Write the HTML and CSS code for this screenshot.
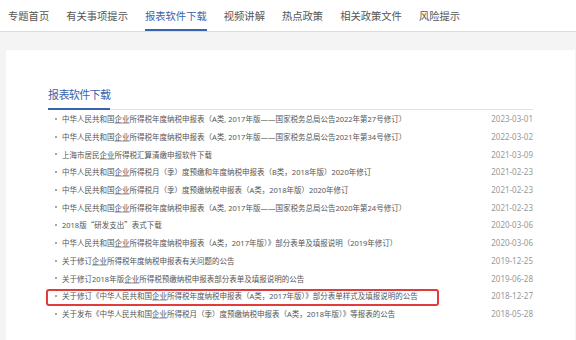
FILE: index.html
```html
<!DOCTYPE html>
<html>
<head>
    <title>报表软件下载</title>
    <link rel="stylesheet" href="styles.css">
</head>
<body>
    <div class="nav">
        <a class="tab">专题首页</a>
        <a class="tab">有关事项提示</a>
        <a class="tab active">报表软件下载</a>
        <a class="tab">视频讲解</a>
        <a class="tab">热点政策</a>
        <a class="tab">相关政策文件</a>
        <a class="tab">风险提示</a>
    </div>

    <div class="card">
        <div class="heading">
            <h2>报表软件下载</h2>
        </div>
        <ul class="list">
            <li><span class="title">中华人民共和国<u>企业</u>所得税年度纳税申报表（A类, 2017年版——国家税务总局公告2022年第27号修订）</span><span class="date">2023-03-01</span></li>
            <li><span class="title">中华人民共和国<u>企业</u>所得税年度纳税申报表（A类, 2017年版——国家税务总局公告2021年第34号修订）</span><span class="date">2022-03-02</span></li>
            <li><span class="title">上海市居民<u>企业</u>所得税汇算清缴申报软件下载</span><span class="date">2021-03-09</span></li>
            <li><span class="title">中华人民共和国<u>企业</u>所得税月（季）度预缴和年度纳税申报表（B类，2018年版）2020年修订</span><span class="date">2021-02-23</span></li>
            <li><span class="title">中华人民共和国<u>企业</u>所得税月（季）度预缴纳税申报表（A类，2018年版）2020年修订</span><span class="date">2021-02-23</span></li>
            <li><span class="title">中华人民共和国<u>企业</u>所得税年度纳税申报表（A类, 2017年版——国家税务总局公告2020年第24号修订）</span><span class="date">2021-02-23</span></li>
            <li><span class="title">2018版<span class="cjk">“研发支出”</span>表式下载</span><span class="date">2020-03-06</span></li>
            <li><span class="title">中华人民共和国<u>企业</u>所得税年度纳税申报表（A类，2017年版）》部分表单及填报说明（2019年修订）</span><span class="date">2020-03-06</span></li>
            <li><span class="title">关于修订<u>企业</u>所得税年度纳税申报表有关问题的公告</span><span class="date">2019-12-25</span></li>
            <li><span class="title">关于修订2018年版<u>企业</u>所得税预缴纳税申报表部分表单及填报说明的公告</span><span class="date">2019-06-28</span></li>
            <li><span class="title">关于修订《中华人民共和国<u>企业</u>所得税年度纳税申报表（A类，2017年版）》部分表单样式及填报说明的公告</span><span class="date">2018-12-27</span><span class="highlight"></span></li>
            <li><span class="title">关于发布《中华人民共和国<u>企业</u>所得税月（季）度预缴纳税申报表（A类，2018年版）》等报表的公告</span><span class="date">2018-05-28</span></li>
        </ul>
    </div>
</body>
</html>
```

FILE: styles.css
```css
body {
    margin: 0;
    background-color: #f4f4f4;
    font-family: "Noto Sans", "Noto Sans CJK SC", sans-serif;
    color: #555;
    height: 340px;
    overflow: hidden;
}

.nav {
    display: flex;
    gap: 17px;
    height: 31px;
    padding-left: 8px;
    background-color: #fff;
    border-bottom: 1px solid #dcdcdc;
}

.tab {
    display: flex;
    align-items: center;
    font-size: 10.3px;
    color: #555;
    border-bottom: 2px solid transparent;
    box-sizing: border-box;
    padding-top: 2px;
}

.tab.active {
    color: #3a63ad;
    border-bottom-color: #3a63ad;
}

.card {
    margin: 18px 1px 0 6px;
    padding: 32px 42px 0;
    background-color: #fff;
    height: 290px;
    box-sizing: border-box;
}

.heading {
    border-bottom: 1px solid #e2e2e2;
    display: flex;
}

.heading h2 {
    margin: 0;
    font-size: 11px;
    letter-spacing: -0.6px;
    font-weight: normal;
    color: #3a63ad;
    line-height: 26px;
    border-bottom: 2px solid #3a63ad;
    margin-bottom: -1px;
}

.list {
    list-style: none;
    margin: 0;
    padding: 0;
}

.list li {
    position: relative;
    display: flex;
    align-items: center;
    justify-content: space-between;
    height: 17.7px;
    padding-left: 14px;
    font-size: 7.5px;
}

.list li::before {
    content: "";
    position: absolute;
    left: 7px;
    top: 8px;
    width: 2px;
    height: 2px;
    border-radius: 50%;
    background-color: #888;
}

.title {
    white-space: nowrap;
}

.title u {
    text-decoration-color: #c4c4c4;
    text-underline-offset: 1px;
}

.cjk {
    font-family: "Noto Sans CJK SC", sans-serif;
}

.date {
    font-size: 8px;
    color: #999;
}

.highlight {
    position: absolute;
    left: -2px;
    top: 2px;
    width: 393px;
    height: 17px;
    box-sizing: border-box;
    border: 2px solid #e23b3b;
    border-radius: 3px;
}
```
